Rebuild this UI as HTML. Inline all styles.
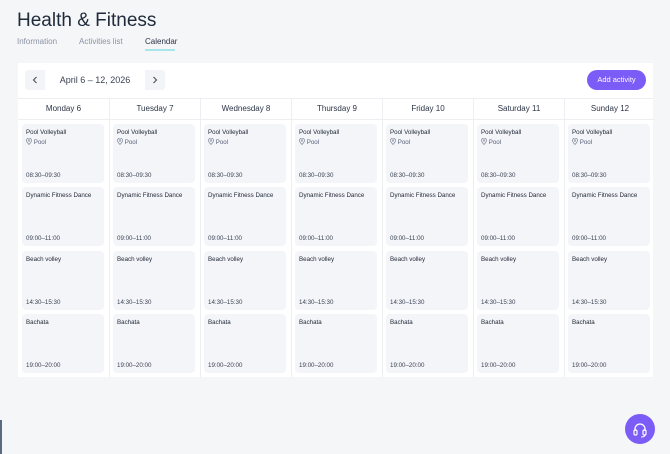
<!DOCTYPE html>
<html><head><style>
*{box-sizing:border-box;margin:0;padding:0}
body{width:670px;height:454px;background:#f5f6f8;font-family:"Liberation Sans",sans-serif;color:#2b3445;position:relative;overflow:hidden}
h1{position:absolute;left:17px;top:10px;font-size:19px;font-weight:400;color:#1f2a3a}
.tab{position:absolute;top:37px;font-size:8px;color:#8a93a3}
.panel{position:absolute;left:18px;top:63px;width:635px;height:314px;background:#fff}
.nav{position:absolute;left:7px;top:7px;width:140px;height:20px;background:#f3f4f7;border-radius:3px}
.nav .mid{position:absolute;left:20px;top:0;width:100px;height:20px;background:#fff;font-size:9px;text-align:center;line-height:20px;color:#3a4355}
.nav svg{position:absolute;top:6px}
.btn{position:absolute;right:7px;top:7px;width:59px;height:20px;background:#7b5cf6;border-radius:10px;color:#fff;font-size:7.5px;text-align:center;line-height:20px}
.col{position:absolute;top:35px;width:91px;height:279px;border-left:1px solid #eceef2}
.col .hd{height:22px;border-bottom:1px solid #eceef2;text-align:center;font-size:8px;line-height:22px;color:#2b3445}
.card{position:absolute;left:4px;width:82px;height:59px;background:#f4f5f8;border-radius:4px;font-size:6.2px;color:#222b3a}
.card .t{position:absolute;left:4px;top:5px}
.card .p{position:absolute;left:4px;top:14px;color:#55607a}
.card .tm{position:absolute;left:4px;bottom:4px;color:#3a4355}
.fab{position:absolute;left:625px;top:414px;width:30px;height:30px;border-radius:50%;background:#7b5cf6}
</style></head><body>
<h1>Health &amp; Fitness</h1>
<div class="tab" style="left:17px">Information</div>
<div class="tab" style="left:79px">Activities list</div>
<div class="tab" style="left:145px;color:#2b3445">Calendar</div>
<div style="position:absolute;left:145px;top:49px;width:30px;height:1.5px;background:#a8e6ea"></div>
<div class="panel">
<div class="nav"><svg style="left:7px" width="6" height="8" viewBox="0 0 6 8"><path d="M4.5 1L1.5 4l3 3" fill="none" stroke="#444" stroke-width="1"/></svg><div class="mid">April 6 – 12, 2026</div><svg style="right:7px" width="6" height="8" viewBox="0 0 6 8"><path d="M1.5 1l3 3-3 3" fill="none" stroke="#444" stroke-width="1"/></svg></div>
<div class="btn">Add activity</div>
<div style="position:absolute;left:0;top:35px;width:635px;height:1px;background:#eceef2"></div>
<div class="col" style="left:0;border-left:none"><div class="hd">Monday 6</div></div>
<div class="col" style="left:91px"><div class="hd">Tuesday 7</div></div>
<div class="col" style="left:182px"><div class="hd">Wednesday 8</div></div>
<div class="col" style="left:273px"><div class="hd">Thursday 9</div></div>
<div class="col" style="left:364px"><div class="hd">Friday 10</div></div>
<div class="col" style="left:455px"><div class="hd">Saturday 11</div></div>
<div class="col" style="left:546px"><div class="hd">Sunday 12</div></div>
</div>
<div id="cards"></div>
<script>
var acts=[["Pool Volleyball","08:30–09:30",1],["Dynamic Fitness Dance","09:00–11:00",0],["Beach volley","14:30–15:30",0],["Bachata","19:00–20:00",0]];
var h="";
for(var c=0;c<7;c++)for(var r=0;r<4;r++){var a=acts[r];
h+='<div class="card" style="left:'+(22+c*91)+'px;top:'+(124+r*63.3)+'px"><div class="t">'+a[0]+'</div>'+(a[2]?'<div class="p"><svg width="6" height="7" viewBox="0 0 6 7" style="vertical-align:-1px"><path d="M3 6.5C1 4.5.5 3.5.5 2.5a2.5 2.5 0 015 0c0 1-.5 2-2.5 4z" fill="none" stroke="#7a8396" stroke-width=".7"/><circle cx="3" cy="2.5" r=".8" fill="none" stroke="#7a8396" stroke-width=".6"/></svg> Pool</div>':'')+'<div class="tm">'+a[1]+'</div></div>';}
document.getElementById("cards").innerHTML=h;
</script>
<div class="fab"><svg width="30" height="30" viewBox="0 0 30 30"><path d="M10 17v-2a5 5 0 0110 0v2" fill="none" stroke="#fff" stroke-width="1.3"/><rect x="9" y="16" width="3" height="5" rx="1.2" fill="none" stroke="#fff" stroke-width="1.2"/><rect x="18" y="16" width="3" height="5" rx="1.2" fill="none" stroke="#fff" stroke-width="1.2"/><path d="M20 21q0 2-4 2" fill="none" stroke="#fff" stroke-width="1.1"/></svg></div>
<div style="position:absolute;left:0;top:420px;width:2px;height:34px;background:#5a6a85"></div>
</body></html>
